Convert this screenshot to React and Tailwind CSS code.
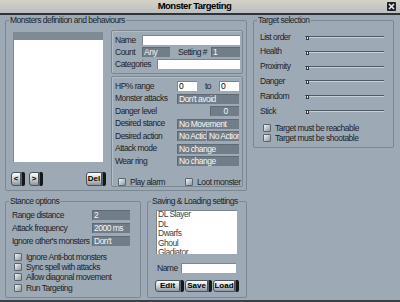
import React from 'react';

const Field = ({ children, className = '' }) => (
  <div className={`h-[10px] bg-[#717d88] text-[#f5f7f9] leading-[10px] pl-[2px] overflow-hidden whitespace-nowrap shadow-[inset_1px_1px_0_#5f6a74] ${className}`}>
    {children}
  </div>
);

const Input = ({ className = '', children }) => (
  <div className={`h-[10px] bg-white text-black leading-[10px] pl-[2px] shadow-[inset_1px_1px_0_#7a858f] ${className}`}>
    {children}
  </div>
);

const Check = ({ label, className = '' }) => (
  <div className={`flex items-center h-[8px] ${className}`}>
    <span className="w-[8px] h-[8px] rounded-[1px] border border-[#5b656e] bg-linear-to-br from-[#f2f4f6] to-[#8f99a2]" />
    <span className="ml-[4px] leading-[8px] whitespace-nowrap">{label}</span>
  </div>
);

const Btn = ({ label, className = '' }) => (
  <div className={`flex h-full ${className}`}>
    <span className="flex-1 flex items-center justify-center rounded-l-[3px] border border-[#4b5259] bg-linear-to-b from-[#fbfcfc] via-[#cfd5da] to-[#8c959e] font-bold text-black">
      {label}
    </span>
    <span className="w-[4px] rounded-r-[2px] bg-[#151719] border-l border-[#5b636b]" />
  </div>
);

const Group = ({ title, className = '', children }) => (
  <fieldset className={`border border-[#7b8793] rounded-[2px] ${className}`}>
    <legend className="ml-[3px] px-[1px] leading-[10px] whitespace-nowrap">{title}</legend>
    {children}
  </fieldset>
);

const Sub = ({ className = '', children }) => (
  <div className={`border border-[#7b8793] rounded-[2px] shadow-[inset_1px_1px_0_#b4bec8] ${className}`}>{children}</div>
);

const Slider = () => (
  <div className="relative w-[79px] h-[2px] border-t border-[#4f5a64] border-b border-b-[#c9d1d8]">
    <span className="absolute left-[1px] -top-[1px] w-[3px] h-[4px] bg-[#eef1f3] border border-[#333a40]" />
  </div>
);

const Row = ({ label, children }) => (
  <div className="flex items-center h-[10px]">
    <span className="w-[62px] whitespace-nowrap">{label}</span>
    {children}
  </div>
);

export default function App() {
  return (
    <div className="w-[400px] h-[302px] overflow-hidden bg-[#9da9b5] text-[#1d2328] text-[8.5px] tracking-[-0.5px] font-['Liberation_Sans',Arial,sans-serif] border-b-2 border-[#3b4148]">
      {/* title bar */}
      <div className="flex items-center h-[13px] bg-linear-to-b from-[#d4d2c6] to-[#bbbfc1]">
        <div className="flex-1 text-center font-bold text-[9.5px] text-black pl-[2px]">Monster Targeting</div>
        <svg width="9" height="9" viewBox="0 0 9 9" className="mr-[4px]">
          <rect x="0" y="0" width="9" height="9" rx="1" fill="#1e2226" />
          <path d="M2 2 L7 7 M7 2 L2 7" stroke="#e8ecef" strokeWidth="1.6" />
        </svg>
      </div>
      <div className="h-[2px] bg-[#2e3338]" />

      <div className="flex px-[5px] gap-[6px]">
        {/* left column */}
        <div className="w-[242px] flex flex-col">
          <Group title="Monsters definition and behaviours" className="h-[176px]">
            <div className="flex items-start pl-[7px]">
              <div className="w-[90px] mt-[7px]">
                <div className="h-[130px] bg-white shadow-[inset_1px_1px_0_#7a858f]">
                  <div className="h-[8px] bg-[#7e8a96]" />
                </div>
                <div className="flex h-[14px] w-[95px] -ml-[2px] mt-[10px] text-[8px] tracking-normal">
                  <Btn label="<" className="w-[14px]" />
                  <Btn label=">" className="w-[14px] ml-[4px]" />
                  <Btn label="Del" className="w-[20px] ml-auto" />
                </div>
              </div>

              <div className="w-[132px] ml-[8px] mt-[5px]">
                <Sub className="h-[44px] pt-[4px] pl-[3px] pr-[2px] flex flex-col gap-[2px]">
                  <div className="flex items-center h-[10px]">
                    <span className="w-[27px]">Name</span>
                    <Input className="flex-1" />
                  </div>
                  <div className="flex items-center h-[10px]">
                    <span className="w-[27px]">Count</span>
                    <Field className="w-[28px]">Any</Field>
                    <span className="ml-[8px]">Setting #</span>
                    <Field className="w-[29px] ml-auto">1</Field>
                  </div>
                  <div className="flex items-center h-[10px]">
                    <span className="w-[42px]">Categories</span>
                    <Input className="flex-1" />
                  </div>
                </Sub>

                <Sub className="h-[111px] mt-[2px] pt-[4px] pl-[3px]">
                  <div className="flex flex-col gap-[2.5px]">
                    <Row label="HP% range">
                      <Input className="w-[20px]">0</Input>
                      <span className="w-[22px] text-center">to</span>
                      <Input className="w-[20px]">0</Input>
                    </Row>
                    <Row label="Monster attacks">
                      <Field className="w-[62px]">Don't avoid</Field>
                    </Row>
                    <Row label="Danger level">
                      <Field className="w-[29px] ml-[33px] text-center pl-0">0</Field>
                    </Row>
                    <Row label="Desired stance">
                      <Field className="w-[62px]">No Movement</Field>
                    </Row>
                    <Row label="Desired action">
                      <Field className="w-[29px]">No Action</Field>
                      <Field className="w-[32px] ml-[1px]">No Action</Field>
                    </Row>
                    <Row label="Attack mode">
                      <Field className="w-[62px]">No change</Field>
                    </Row>
                    <Row label="Wear ring">
                      <Field className="w-[62px]">No change</Field>
                    </Row>
                  </div>
                  <div className="flex mt-[12px] pl-[3px]">
                    <Check label="Play alarm" className="w-[67px]" />
                    <Check label="Loot monster" />
                  </div>
                </Sub>
              </div>
            </div>
          </Group>

          <div className="flex gap-[6px] mt-[5px]">
            <Group title="Stance options" className="w-[136px] h-[102px]">
              <div className="pl-[6px] mt-[4px] flex flex-col gap-[3px]">
                <div className="flex items-center h-[10px]">
                  <span className="w-[80px]">Range distance</span>
                  <Field className="w-[38px]">2</Field>
                </div>
                <div className="flex items-center h-[10px]">
                  <span className="w-[80px]">Attack frequency</span>
                  <Field className="w-[38px]">2000 ms</Field>
                </div>
                <div className="flex items-center h-[10px]">
                  <span className="w-[80px] whitespace-nowrap">Ignore other's monsters</span>
                  <Field className="w-[38px]">Don't</Field>
                </div>
              </div>
              <div className="pl-[8px] mt-[7px] flex flex-col gap-[2px]">
                <Check label="Ignore Anti-bot monsters" />
                <Check label="Sync spell with attacks" />
                <Check label="Allow diagonal movement" />
                <Check label="Run Targeting" className="mt-[1px]" />
              </div>
            </Group>

            <Group title="Saving & Loading settings" className="w-[100px] h-[102px]">
              <div className="pl-[8px] mt-[4px]">
                <div className="w-[81px] h-[44px] bg-white shadow-[inset_1px_1px_0_#7a858f] overflow-hidden pl-[2px] text-[#3b4248] leading-[9.5px]">
                  <div>DL Slayer</div>
                  <div>DL</div>
                  <div>Dwarfs</div>
                  <div>Ghoul</div>
                  <div>Gladiator</div>
                </div>
                <div className="flex items-center h-[10px] mt-[9px]">
                  <span className="w-[25px] pl-[1px]">Name</span>
                  <Input className="w-[55px]" />
                </div>
                <div className="flex h-[12px] mt-[7px] -ml-[1px] text-[8px] tracking-normal">
                  <Btn label="Edit" className="w-[29px]" />
                  <Btn label="Save" className="w-[27px] ml-[1px]" />
                  <Btn label="Load" className="w-[26px] ml-[1px]" />
                </div>
              </div>
            </Group>
          </div>
        </div>

        {/* right column */}
        <div className="w-[141px]">
          <Group title="Target selection" className="h-[133px]">
            <div className="pl-[6px] mt-[7px] flex flex-col gap-[4.8px]">
              {['List order', 'Health', 'Proximity', 'Danger', 'Random', 'Stick'].map((l) => (
                <div key={l} className="flex items-center h-[10px]">
                  <span className="w-[45px]">{l}</span>
                  <Slider />
                </div>
              ))}
            </div>
            <div className="pl-[9px] mt-[8px] flex flex-col gap-[2px]">
              <Check label="Target must be reachable" />
              <Check label="Target must be shootable" />
            </div>
          </Group>
        </div>
      </div>
    </div>
  );
}
